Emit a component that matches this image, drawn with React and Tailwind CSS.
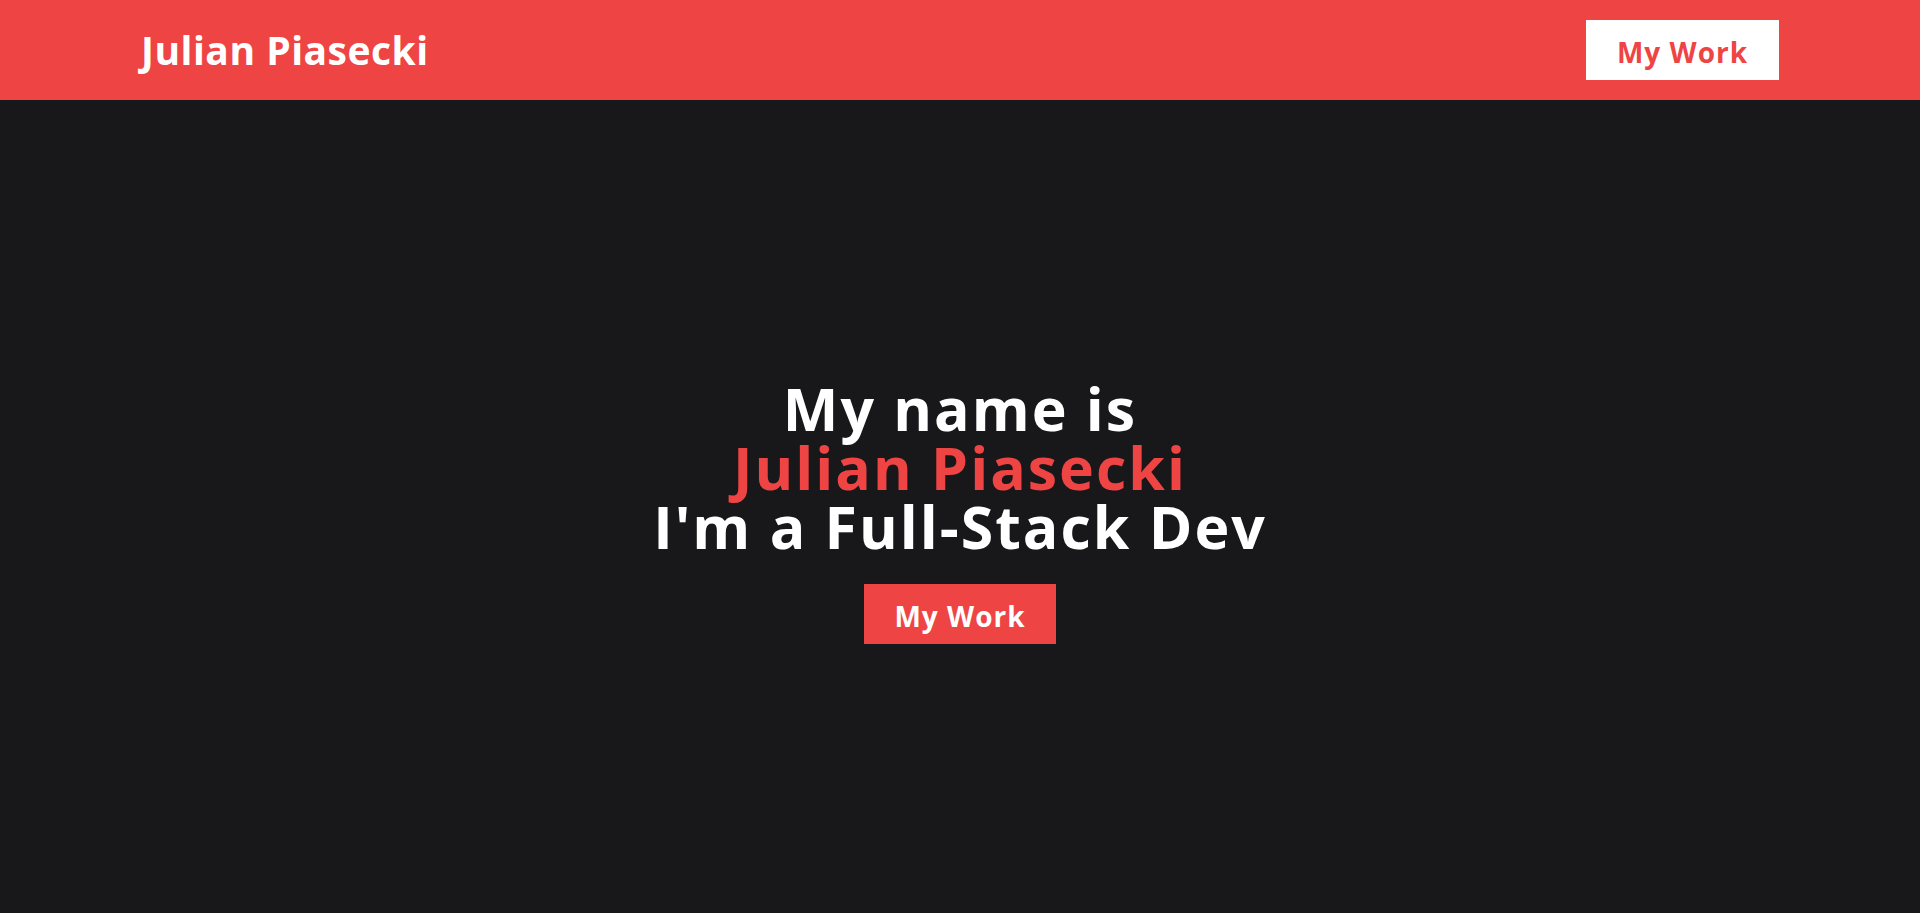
export default function App() {
  return (
    <div className="min-h-screen bg-[#18181b] font-['Open_Sans',Arial,sans-serif]">
      <header className="flex h-[100px] items-center justify-between bg-[#ef4444] px-[141px]">
        <a href="#" className="text-[39px] font-bold tracking-[0.5px] text-white">
          Julian Piasecki
        </a>
        <a
          href="#work"
          className="flex h-[60px] w-[193px] items-center justify-center bg-white pt-[3px] text-[28px] leading-none font-bold tracking-[1px] text-[#ef4444]"
        >
          My Work
        </a>
      </header>

      <main className="flex h-[813px] flex-col items-center justify-center pt-[10px]">
        <h1 className="text-center text-[59px] leading-none font-bold tracking-[2px] text-white">
          My name is
          <br />
          <span className="text-[#ef4444]">Julian Piasecki</span>
          <br />
          I'm a Full-Stack Dev
        </h1>
        <a
          href="#work"
          className="mt-[28px] flex h-[60px] w-[192px] items-center justify-center bg-[#ef4444] pt-[3px] text-[28px] leading-none font-bold tracking-[1px] text-white"
        >
          My Work
        </a>
      </main>
    </div>
  )
}
